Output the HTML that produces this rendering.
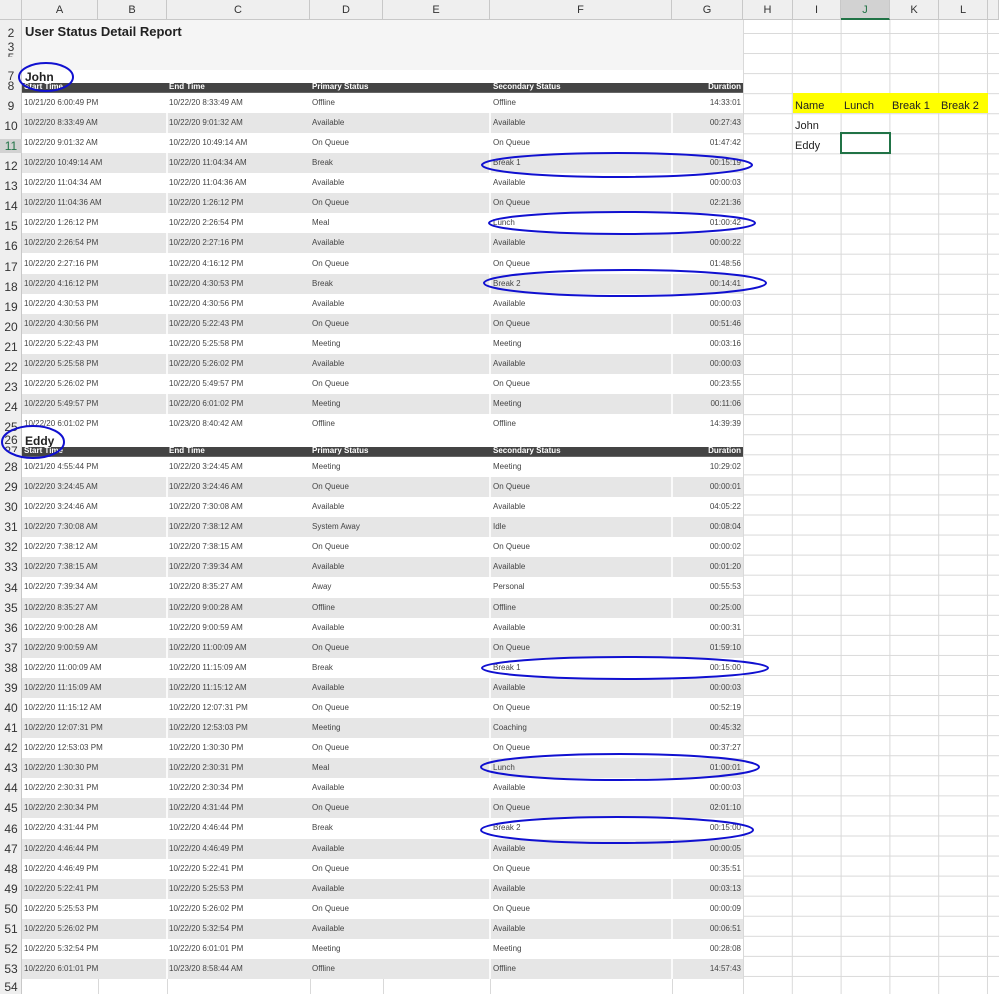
<!DOCTYPE html>
<html><head><meta charset="utf-8"><style>
*{margin:0;padding:0;box-sizing:border-box}
body{width:999px;height:994px;overflow:hidden;background:#fff;font-family:"Liberation Sans",Arial,sans-serif;position:relative}
.grid{position:absolute;left:743px;top:20px;width:256px;height:974px;
background-image:linear-gradient(to right,#d9d9d9 1px,transparent 1px),linear-gradient(to bottom,#d9d9d9 1px,transparent 1px);
background-size:48.8px 20.07px;background-position:0 13px}
.vl{position:absolute;top:979px;height:15px;width:1px;background:#d9d9d9}
.colh{position:absolute;top:0;height:20px;border-right:1px solid #c8c8c8;border-bottom:1px solid #c8c8c8;background:#efefef;font-size:11px;color:#333;text-align:center;line-height:20px}
.rowh{position:absolute;left:0;top:20px;width:22px;height:974px;background:#efefef;border-right:1px solid #c8c8c8}
.rn{position:absolute;left:0;width:22px;font-size:12px;color:#333;text-align:center}
.r{position:absolute;left:22px;width:721px;height:20px;font-size:8px;color:#444}
.r.g{background:#e6e6e6}
.r b{position:absolute;top:5px;font-weight:normal;white-space:nowrap}
.r b.a{left:2px}.r b.c{left:147px}.r b.d{left:290px}.r b.f{left:471px}.r b.t{right:2px}
.r::before,.r::after{content:"";position:absolute;top:0;height:20px;width:2px;background:rgba(255,255,255,.8)}
.r::before{left:144px}.r::after{left:467px}
.r i{position:absolute;top:0;left:649px;height:20px;width:2px;background:rgba(255,255,255,.8)}
.hd{position:absolute;left:22px;width:721px;height:10px;background:#444;color:#fff;font-size:8px;font-weight:bold;line-height:8px;border-bottom:1px solid #666}
.hd span{position:absolute;top:0}
</style></head><body>
<div class="grid"></div>
<div class="vl" style="left:98px"></div><div class="vl" style="left:167px"></div><div class="vl" style="left:310px"></div><div class="vl" style="left:383px"></div><div class="vl" style="left:490px"></div><div class="vl" style="left:672px"></div>
<div style="position:absolute;left:22px;top:20px;width:721px;height:50px;background:#f5f5f5"></div>
<div style="position:absolute;left:25px;top:24px;font-size:13px;font-weight:bold;color:#222">User Status Detail Report</div>
<div style="position:absolute;left:25px;top:70px;font-size:12px;font-weight:bold;color:#222">John</div>
<div style="position:absolute;left:25px;top:434px;font-size:12px;font-weight:bold;color:#222">Eddy</div>

<div class="hd" style="top:83px"><span style="left:2px">Start Time</span><span style="left:147px">End Time</span><span style="left:290px">Primary Status</span><span style="left:471px">Secondary Status</span><span style="right:2px">Duration</span></div>
<div class="hd" style="top:447px"><span style="left:2px">Start Time</span><span style="left:147px">End Time</span><span style="left:290px">Primary Status</span><span style="left:471px">Secondary Status</span><span style="right:2px">Duration</span></div>

<div class="r" style="top:93px"><b class="a">10/21/20 6:00:49 PM</b><b class="c">10/22/20 8:33:49 AM</b><b class="d">Offline</b><b class="f">Offline</b><b class="t">14:33:01</b><i></i></div>
<div class="r g" style="top:113px"><b class="a">10/22/20 8:33:49 AM</b><b class="c">10/22/20 9:01:32 AM</b><b class="d">Available</b><b class="f">Available</b><b class="t">00:27:43</b><i></i></div>
<div class="r" style="top:133px"><b class="a">10/22/20 9:01:32 AM</b><b class="c">10/22/20 10:49:14 AM</b><b class="d">On Queue</b><b class="f">On Queue</b><b class="t">01:47:42</b><i></i></div>
<div class="r g" style="top:153px"><b class="a">10/22/20 10:49:14 AM</b><b class="c">10/22/20 11:04:34 AM</b><b class="d">Break</b><b class="f">Break 1</b><b class="t">00:15:19</b><i></i></div>
<div class="r" style="top:173px"><b class="a">10/22/20 11:04:34 AM</b><b class="c">10/22/20 11:04:36 AM</b><b class="d">Available</b><b class="f">Available</b><b class="t">00:00:03</b><i></i></div>
<div class="r g" style="top:193px"><b class="a">10/22/20 11:04:36 AM</b><b class="c">10/22/20 1:26:12 PM</b><b class="d">On Queue</b><b class="f">On Queue</b><b class="t">02:21:36</b><i></i></div>
<div class="r" style="top:213px"><b class="a">10/22/20 1:26:12 PM</b><b class="c">10/22/20 2:26:54 PM</b><b class="d">Meal</b><b class="f">Lunch</b><b class="t">01:00:42</b><i></i></div>
<div class="r g" style="top:233px"><b class="a">10/22/20 2:26:54 PM</b><b class="c">10/22/20 2:27:16 PM</b><b class="d">Available</b><b class="f">Available</b><b class="t">00:00:22</b><i></i></div>
<div class="r" style="top:254px"><b class="a">10/22/20 2:27:16 PM</b><b class="c">10/22/20 4:16:12 PM</b><b class="d">On Queue</b><b class="f">On Queue</b><b class="t">01:48:56</b><i></i></div>
<div class="r g" style="top:274px"><b class="a">10/22/20 4:16:12 PM</b><b class="c">10/22/20 4:30:53 PM</b><b class="d">Break</b><b class="f">Break 2</b><b class="t">00:14:41</b><i></i></div>
<div class="r" style="top:294px"><b class="a">10/22/20 4:30:53 PM</b><b class="c">10/22/20 4:30:56 PM</b><b class="d">Available</b><b class="f">Available</b><b class="t">00:00:03</b><i></i></div>
<div class="r g" style="top:314px"><b class="a">10/22/20 4:30:56 PM</b><b class="c">10/22/20 5:22:43 PM</b><b class="d">On Queue</b><b class="f">On Queue</b><b class="t">00:51:46</b><i></i></div>
<div class="r" style="top:334px"><b class="a">10/22/20 5:22:43 PM</b><b class="c">10/22/20 5:25:58 PM</b><b class="d">Meeting</b><b class="f">Meeting</b><b class="t">00:03:16</b><i></i></div>
<div class="r g" style="top:354px"><b class="a">10/22/20 5:25:58 PM</b><b class="c">10/22/20 5:26:02 PM</b><b class="d">Available</b><b class="f">Available</b><b class="t">00:00:03</b><i></i></div>
<div class="r" style="top:374px"><b class="a">10/22/20 5:26:02 PM</b><b class="c">10/22/20 5:49:57 PM</b><b class="d">On Queue</b><b class="f">On Queue</b><b class="t">00:23:55</b><i></i></div>
<div class="r g" style="top:394px"><b class="a">10/22/20 5:49:57 PM</b><b class="c">10/22/20 6:01:02 PM</b><b class="d">Meeting</b><b class="f">Meeting</b><b class="t">00:11:06</b><i></i></div>
<div class="r" style="top:414px"><b class="a">10/22/20 6:01:02 PM</b><b class="c">10/23/20 8:40:42 AM</b><b class="d">Offline</b><b class="f">Offline</b><b class="t">14:39:39</b><i></i></div>

<div class="r" style="top:457px"><b class="a">10/21/20 4:55:44 PM</b><b class="c">10/22/20 3:24:45 AM</b><b class="d">Meeting</b><b class="f">Meeting</b><b class="t">10:29:02</b><i></i></div>
<div class="r g" style="top:477px"><b class="a">10/22/20 3:24:45 AM</b><b class="c">10/22/20 3:24:46 AM</b><b class="d">On Queue</b><b class="f">On Queue</b><b class="t">00:00:01</b><i></i></div>
<div class="r" style="top:497px"><b class="a">10/22/20 3:24:46 AM</b><b class="c">10/22/20 7:30:08 AM</b><b class="d">Available</b><b class="f">Available</b><b class="t">04:05:22</b><i></i></div>
<div class="r g" style="top:517px"><b class="a">10/22/20 7:30:08 AM</b><b class="c">10/22/20 7:38:12 AM</b><b class="d">System Away</b><b class="f">Idle</b><b class="t">00:08:04</b><i></i></div>
<div class="r" style="top:537px"><b class="a">10/22/20 7:38:12 AM</b><b class="c">10/22/20 7:38:15 AM</b><b class="d">On Queue</b><b class="f">On Queue</b><b class="t">00:00:02</b><i></i></div>
<div class="r g" style="top:557px"><b class="a">10/22/20 7:38:15 AM</b><b class="c">10/22/20 7:39:34 AM</b><b class="d">Available</b><b class="f">Available</b><b class="t">00:01:20</b><i></i></div>
<div class="r" style="top:577px"><b class="a">10/22/20 7:39:34 AM</b><b class="c">10/22/20 8:35:27 AM</b><b class="d">Away</b><b class="f">Personal</b><b class="t">00:55:53</b><i></i></div>
<div class="r g" style="top:598px"><b class="a">10/22/20 8:35:27 AM</b><b class="c">10/22/20 9:00:28 AM</b><b class="d">Offline</b><b class="f">Offline</b><b class="t">00:25:00</b><i></i></div>
<div class="r" style="top:618px"><b class="a">10/22/20 9:00:28 AM</b><b class="c">10/22/20 9:00:59 AM</b><b class="d">Available</b><b class="f">Available</b><b class="t">00:00:31</b><i></i></div>
<div class="r g" style="top:638px"><b class="a">10/22/20 9:00:59 AM</b><b class="c">10/22/20 11:00:09 AM</b><b class="d">On Queue</b><b class="f">On Queue</b><b class="t">01:59:10</b><i></i></div>
<div class="r" style="top:658px"><b class="a">10/22/20 11:00:09 AM</b><b class="c">10/22/20 11:15:09 AM</b><b class="d">Break</b><b class="f">Break 1</b><b class="t">00:15:00</b><i></i></div>
<div class="r g" style="top:678px"><b class="a">10/22/20 11:15:09 AM</b><b class="c">10/22/20 11:15:12 AM</b><b class="d">Available</b><b class="f">Available</b><b class="t">00:00:03</b><i></i></div>
<div class="r" style="top:698px"><b class="a">10/22/20 11:15:12 AM</b><b class="c">10/22/20 12:07:31 PM</b><b class="d">On Queue</b><b class="f">On Queue</b><b class="t">00:52:19</b><i></i></div>
<div class="r g" style="top:718px"><b class="a">10/22/20 12:07:31 PM</b><b class="c">10/22/20 12:53:03 PM</b><b class="d">Meeting</b><b class="f">Coaching</b><b class="t">00:45:32</b><i></i></div>
<div class="r" style="top:738px"><b class="a">10/22/20 12:53:03 PM</b><b class="c">10/22/20 1:30:30 PM</b><b class="d">On Queue</b><b class="f">On Queue</b><b class="t">00:37:27</b><i></i></div>
<div class="r g" style="top:758px"><b class="a">10/22/20 1:30:30 PM</b><b class="c">10/22/20 2:30:31 PM</b><b class="d">Meal</b><b class="f">Lunch</b><b class="t">01:00:01</b><i></i></div>
<div class="r" style="top:778px"><b class="a">10/22/20 2:30:31 PM</b><b class="c">10/22/20 2:30:34 PM</b><b class="d">Available</b><b class="f">Available</b><b class="t">00:00:03</b><i></i></div>
<div class="r g" style="top:798px"><b class="a">10/22/20 2:30:34 PM</b><b class="c">10/22/20 4:31:44 PM</b><b class="d">On Queue</b><b class="f">On Queue</b><b class="t">02:01:10</b><i></i></div>
<div class="r" style="top:818px"><b class="a">10/22/20 4:31:44 PM</b><b class="c">10/22/20 4:46:44 PM</b><b class="d">Break</b><b class="f">Break 2</b><b class="t">00:15:00</b><i></i></div>
<div class="r g" style="top:839px"><b class="a">10/22/20 4:46:44 PM</b><b class="c">10/22/20 4:46:49 PM</b><b class="d">Available</b><b class="f">Available</b><b class="t">00:00:05</b><i></i></div>
<div class="r" style="top:859px"><b class="a">10/22/20 4:46:49 PM</b><b class="c">10/22/20 5:22:41 PM</b><b class="d">On Queue</b><b class="f">On Queue</b><b class="t">00:35:51</b><i></i></div>
<div class="r g" style="top:879px"><b class="a">10/22/20 5:22:41 PM</b><b class="c">10/22/20 5:25:53 PM</b><b class="d">Available</b><b class="f">Available</b><b class="t">00:03:13</b><i></i></div>
<div class="r" style="top:899px"><b class="a">10/22/20 5:25:53 PM</b><b class="c">10/22/20 5:26:02 PM</b><b class="d">On Queue</b><b class="f">On Queue</b><b class="t">00:00:09</b><i></i></div>
<div class="r g" style="top:919px"><b class="a">10/22/20 5:26:02 PM</b><b class="c">10/22/20 5:32:54 PM</b><b class="d">Available</b><b class="f">Available</b><b class="t">00:06:51</b><i></i></div>
<div class="r" style="top:939px"><b class="a">10/22/20 5:32:54 PM</b><b class="c">10/22/20 6:01:01 PM</b><b class="d">Meeting</b><b class="f">Meeting</b><b class="t">00:28:08</b><i></i></div>
<div class="r g" style="top:959px"><b class="a">10/22/20 6:01:01 PM</b><b class="c">10/23/20 8:58:44 AM</b><b class="d">Offline</b><b class="f">Offline</b><b class="t">14:57:43</b><i></i></div>

<div style="position:absolute;left:793px;top:93px;width:195px;height:20px;background:#ffff00"></div>
<div style="position:absolute;top:100px;left:795px;font-size:11px;color:#222">Name</div>
<div style="position:absolute;top:100px;left:844px;font-size:11px;color:#222">Lunch</div>
<div style="position:absolute;top:100px;left:892px;font-size:11px;color:#222">Break 1</div>
<div style="position:absolute;top:100px;left:941px;font-size:11px;color:#222">Break 2</div>
<div style="position:absolute;top:120px;left:795px;font-size:11px;color:#222">John</div>
<div style="position:absolute;top:140px;left:795px;font-size:11px;color:#222">Eddy</div>
<div style="position:absolute;left:840px;top:132px;width:51px;height:22px;border:2px solid #217346"></div>

<div style="position:absolute;left:0;top:0;width:22px;height:20px;background:#efefef;border-right:1px solid #c8c8c8;border-bottom:1px solid #c8c8c8"></div>
<div class="colh" style="left:22px;width:76px">A</div>
<div class="colh" style="left:98px;width:69px">B</div>
<div class="colh" style="left:167px;width:143px">C</div>
<div class="colh" style="left:310px;width:73px">D</div>
<div class="colh" style="left:383px;width:107px">E</div>
<div class="colh" style="left:490px;width:182px">F</div>
<div class="colh" style="left:672px;width:71px">G</div>
<div class="colh" style="left:743px;width:50px">H</div>
<div class="colh" style="left:793px;width:48px">I</div>
<div class="colh" style="left:841px;width:49px;background:#d2d2d2;border-bottom:2px solid #217346;color:#217346">J</div>
<div class="colh" style="left:890px;width:49px">K</div>
<div class="colh" style="left:939px;width:49px">L</div>
<div class="colh" style="left:988px;width:11px"></div>
<div class="rowh">
<div class="rn" style="top:6px">2</div><div class="rn" style="top:20px">3</div><div class="rn" style="top:31px;height:6px;overflow:hidden">5</div>
<div class="rn" style="top:49px">7</div><div class="rn" style="top:59px">8</div>
<div class="rn" style="top:79px">9</div><div class="rn" style="top:99px">10</div><div class="rn" style="top:119px;color:#217346;background:#d2d2d2">11</div>
<div class="rn" style="top:139px">12</div><div class="rn" style="top:159px">13</div><div class="rn" style="top:179px">14</div><div class="rn" style="top:199px">15</div><div class="rn" style="top:219px">16</div><div class="rn" style="top:240px">17</div><div class="rn" style="top:260px">18</div><div class="rn" style="top:280px">19</div><div class="rn" style="top:300px">20</div><div class="rn" style="top:320px">21</div><div class="rn" style="top:340px">22</div><div class="rn" style="top:360px">23</div><div class="rn" style="top:380px">24</div><div class="rn" style="top:400px">25</div><div class="rn" style="top:413px">26</div><div class="rn" style="top:424px;height:8px;overflow:hidden">27</div>
<div class="rn" style="top:440px">28</div><div class="rn" style="top:460px">29</div><div class="rn" style="top:480px">30</div><div class="rn" style="top:500px">31</div><div class="rn" style="top:520px">32</div><div class="rn" style="top:540px">33</div><div class="rn" style="top:561px">34</div><div class="rn" style="top:581px">35</div><div class="rn" style="top:601px">36</div><div class="rn" style="top:621px">37</div><div class="rn" style="top:641px">38</div><div class="rn" style="top:661px">39</div><div class="rn" style="top:681px">40</div><div class="rn" style="top:701px">41</div><div class="rn" style="top:721px">42</div><div class="rn" style="top:741px">43</div><div class="rn" style="top:761px">44</div><div class="rn" style="top:781px">45</div><div class="rn" style="top:802px">46</div><div class="rn" style="top:822px">47</div><div class="rn" style="top:842px">48</div><div class="rn" style="top:862px">49</div><div class="rn" style="top:882px">50</div><div class="rn" style="top:902px">51</div><div class="rn" style="top:922px">52</div><div class="rn" style="top:942px">53</div><div class="rn" style="top:960px">54</div>
</div>

<svg style="position:absolute;left:0;top:0" width="999" height="994" fill="none" stroke="#1010d0" stroke-width="2">
<ellipse cx="46" cy="77" rx="27" ry="14"/>
<ellipse cx="617" cy="165" rx="135" ry="12"/>
<ellipse cx="622" cy="223" rx="133" ry="11"/>
<ellipse cx="625" cy="283" rx="141" ry="13"/>
<ellipse cx="33" cy="442" rx="31" ry="16"/>
<ellipse cx="625" cy="668" rx="143" ry="11"/>
<ellipse cx="620" cy="767" rx="139" ry="13"/>
<ellipse cx="617" cy="830" rx="136" ry="13"/>
</svg>
</body></html>
